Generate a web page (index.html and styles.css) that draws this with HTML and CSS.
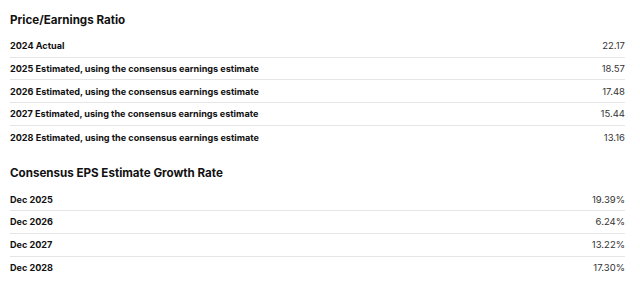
FILE: index.html
```html
<!DOCTYPE html>
<html>
<head>
<meta charset="utf-8">
<link rel="stylesheet" href="styles.css">
</head>
<body>
<div class="page">
  <section class="section">
    <h2 class="title">Price/Earnings Ratio</h2>
    <div class="table">
      <div class="row"><span class="label">2024 Actual</span><span class="value">22.17</span></div>
      <div class="row"><span class="label">2025 Estimated, using the consensus earnings estimate</span><span class="value">18.57</span></div>
      <div class="row"><span class="label">2026 Estimated, using the consensus earnings estimate</span><span class="value">17.48</span></div>
      <div class="row"><span class="label">2027 Estimated, using the consensus earnings estimate</span><span class="value">15.44</span></div>
      <div class="row"><span class="label">2028 Estimated, using the consensus earnings estimate</span><span class="value">13.16</span></div>
    </div>
  </section>
  <section class="section">
    <h2 class="title">Consensus EPS Estimate Growth Rate</h2>
    <div class="table">
      <div class="row"><span class="label">Dec 2025</span><span class="value">19.39%</span></div>
      <div class="row"><span class="label">Dec 2026</span><span class="value">6.24%</span></div>
      <div class="row"><span class="label">Dec 2027</span><span class="value">13.22%</span></div>
      <div class="row"><span class="label">Dec 2028</span><span class="value">17.30%</span></div>
    </div>
  </section>
</div>
</body>
</html>
```

FILE: styles.css
```css
html, body {
  margin: 0;
  padding: 0;
  background: #ffffff;
}

body {
  font-family: Inter, "Liberation Sans", sans-serif;
  color: #111111;
}

.page {
  width: 615px;
  padding: 12px 0 0 10px;
  display: flex;
  flex-direction: column;
  gap: 17px;
}

.section {
  display: flex;
  flex-direction: column;
}

.title {
  margin: 0 0 7px 0;
  font-size: 11.6px;
  line-height: 16px;
  font-weight: 700;
  color: #111111;
}

.table {
  display: flex;
  flex-direction: column;
}

.row {
  display: flex;
  justify-content: space-between;
  align-items: center;
  height: 21.7px;
  border-bottom: 1px solid #e6e6e6;
}

.row:last-child {
  border-bottom: none;
  height: 22.7px;
}

.label {
  font-size: 9.1px;
  font-weight: 700;
  color: #111111;
}

.value {
  font-size: 9.5px;
  font-weight: 400;
  color: #333333;
}
```
